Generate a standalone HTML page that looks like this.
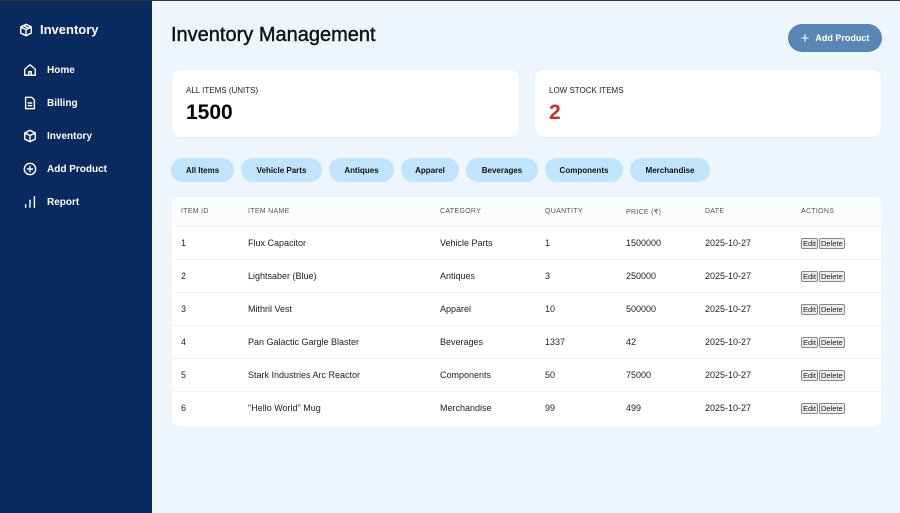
<!DOCTYPE html><html><head><style>
*{box-sizing:border-box;margin:0;padding:0}
body{width:900px;height:513px;font-family:"Liberation Sans",sans-serif;background:#eef5fd;position:relative;overflow:hidden}
.topl{position:absolute;left:0;top:0;width:900px;height:1px;background:#333}
.sb{position:absolute;left:0;top:1px;width:152px;height:512px;background:#082a5e;color:#fff}
.sb .logo{position:absolute;left:19px;top:21px;font-size:13px;font-weight:bold;display:flex;align-items:center;gap:7px}
.nav{position:absolute;left:23px;display:flex;align-items:center;gap:10px;font-size:10px;font-weight:bold}
.nav svg,.logo svg{width:14px;height:14px;fill:none;stroke:#fff;stroke-width:1.6;stroke-linecap:round;stroke-linejoin:round}
h1{position:absolute;left:171px;top:24px;font-size:20px;font-weight:normal;color:#111;-webkit-text-stroke:0.4px #111}
.btn{position:absolute;left:788px;top:24px;width:94px;height:28px;border-radius:14px;background:#5a86b6;color:#fff;font-size:9px;font-weight:bold;display:flex;align-items:center;justify-content:center;gap:6px}
.card{position:absolute;top:70px;height:67px;background:#fff;border-radius:8px;box-shadow:0 0 3px rgba(0,0,0,.05)}
.card .l{position:absolute;left:14px;top:16px;font-size:8px;color:#222}
.card .v{position:absolute;left:14px;top:31px;font-size:21px;font-weight:bold}
.chip{position:absolute;top:158px;height:24px;border-radius:12px;background:#bfe4fb;font-size:8px;font-weight:bold;display:flex;align-items:center;justify-content:center;color:#111}
.tbl{position:absolute;left:172px;top:197px;width:709px;height:229px;background:#fff;border-radius:6px}
.row{position:absolute;left:0;width:709px;height:33px;border-bottom:1px solid #eef0f3;font-size:9px;color:#222}
.row span{position:absolute;top:11px;line-height:11px}
.hd{background:#fafcfe;font-size:7px;color:#555;letter-spacing:.3px;height:30px;border-radius:6px 6px 0 0}
.hd span{top:10px;line-height:10px}
.b{display:inline-block;border:1px solid #888;background:#eee;font-size:7.5px;padding:0 1px;border-radius:2px;margin-right:1px;line-height:9px;font-style:normal}
</style></head><body>
<div class="topl"></div>
<div class="sb">
<div class="logo"><svg viewBox="0 0 16 16"><path d="M8 1.5l6 3v7l-6 3-6-3v-7z M2 4.5l6 3 6-3 M8 7.5v7 M5 3l6 3"/></svg>Inventory</div>
<div class="nav" style="top:62px"><svg viewBox="0 0 16 16"><path d="M2 7l6-5 6 5v7H2z M6.5 14v-4h3v4"/></svg>Home</div>
<div class="nav" style="top:95px"><svg viewBox="0 0 16 16"><path d="M3 1.5h7l3 3v10H3z M6 8h4 M6 11h4"/></svg>Billing</div>
<div class="nav" style="top:128px"><svg viewBox="0 0 16 16"><path d="M8 1.5l6 3v7l-6 3-6-3v-7z M2 4.5l6 3 6-3 M8 7.5v7"/></svg>Inventory</div>
<div class="nav" style="top:161px"><svg viewBox="0 0 16 16"><circle cx="8" cy="8" r="6.5"/><path d="M8 5v6 M5 8h6"/></svg>Add Product</div>
<div class="nav" style="top:194px"><svg viewBox="0 0 16 16"><path d="M3 14v-3 M8 14V6 M13 14V2"/></svg>Report</div>
</div>
<h1>Inventory Management</h1>
<div class="btn"><span style="font-size:15px;font-weight:normal;line-height:1">+</span>Add Product</div>
<div class="card" style="left:172px;width:347px"><div class="l">ALL ITEMS (UNITS)</div><div class="v">1500</div></div>
<div class="card" style="left:535px;width:346px"><div class="l">LOW STOCK ITEMS</div><div class="v" style="color:#c9302c">2</div></div>
<div class="chip" style="left:171px;width:63px">All Items</div>
<div class="chip" style="left:241px;width:81px">Vehicle Parts</div>
<div class="chip" style="left:329px;width:65px">Antiques</div>
<div class="chip" style="left:401px;width:58px">Apparel</div>
<div class="chip" style="left:466px;width:72px">Beverages</div>
<div class="chip" style="left:545px;width:78px">Components</div>
<div class="chip" style="left:630px;width:80px">Merchandise</div>
<div class="tbl">
<div class="row hd" style="top:0"><span style="left:9px">ITEM ID</span><span style="left:76px">ITEM NAME</span><span style="left:268px">CATEGORY</span><span style="left:373px">QUANTITY</span><span style="left:454px">PRICE (<span style="position:static;font-family:'DejaVu Sans'">₹</span>)</span><span style="left:533px">DATE</span><span style="left:629px">ACTIONS</span></div>
<div class="row" style="top:30px"><span style="left:9px">1</span><span style="left:76px">Flux Capacitor</span><span style="left:268px">Vehicle Parts</span><span style="left:373px">1</span><span style="left:454px">1500000</span><span style="left:533px">2025-10-27</span><span style="left:629px"><i class="b">Edit</i><i class="b">Delete</i></span></div>
<div class="row" style="top:63px"><span style="left:9px">2</span><span style="left:76px">Lightsaber (Blue)</span><span style="left:268px">Antiques</span><span style="left:373px">3</span><span style="left:454px">250000</span><span style="left:533px">2025-10-27</span><span style="left:629px"><i class="b">Edit</i><i class="b">Delete</i></span></div>
<div class="row" style="top:96px"><span style="left:9px">3</span><span style="left:76px">Mithril Vest</span><span style="left:268px">Apparel</span><span style="left:373px">10</span><span style="left:454px">500000</span><span style="left:533px">2025-10-27</span><span style="left:629px"><i class="b">Edit</i><i class="b">Delete</i></span></div>
<div class="row" style="top:129px"><span style="left:9px">4</span><span style="left:76px">Pan Galactic Gargle Blaster</span><span style="left:268px">Beverages</span><span style="left:373px">1337</span><span style="left:454px">42</span><span style="left:533px">2025-10-27</span><span style="left:629px"><i class="b">Edit</i><i class="b">Delete</i></span></div>
<div class="row" style="top:162px"><span style="left:9px">5</span><span style="left:76px">Stark Industries Arc Reactor</span><span style="left:268px">Components</span><span style="left:373px">50</span><span style="left:454px">75000</span><span style="left:533px">2025-10-27</span><span style="left:629px"><i class="b">Edit</i><i class="b">Delete</i></span></div>
<div class="row" style="top:195px;border:none"><span style="left:9px">6</span><span style="left:76px">"Hello World" Mug</span><span style="left:268px">Merchandise</span><span style="left:373px">99</span><span style="left:454px">499</span><span style="left:533px">2025-10-27</span><span style="left:629px"><i class="b">Edit</i><i class="b">Delete</i></span></div>
</div>
</body></html>
